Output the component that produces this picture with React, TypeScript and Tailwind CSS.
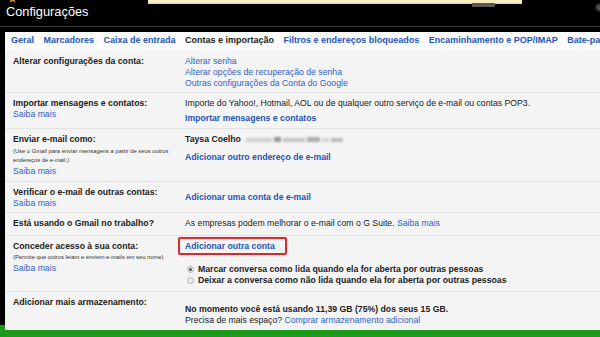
import React from "react";

const link = "text-[#2f63c8]";
const linkB = "text-[#2455b8] font-bold";

function Row({
  h,
  left,
  right,
  rightPt = "pt-[5px]",
  last = false,
}: {
  h: string;
  left: React.ReactNode;
  right: React.ReactNode;
  rightPt?: string;
  last?: boolean;
}) {
  return (
    <div className={`${h} flex shrink-0 ${last ? "" : "border-b border-[#e2e2e2]"}`}>
      <div className="w-[180px] shrink-0 pl-[8px] pt-[5px]">{left}</div>
      <div className={`flex-1 ${rightPt} whitespace-nowrap`}>{right}</div>
    </div>
  );
}

function Label({ children }: { children: React.ReactNode }) {
  return <div className="font-bold text-[#222] leading-[11px]">{children}</div>;
}

function Small({ children }: { children: React.ReactNode }) {
  return <div className="text-[5.8px] text-[#333] leading-[9.5px] whitespace-nowrap">{children}</div>;
}

function Radio({ checked, children }: { checked?: boolean; children: React.ReactNode }) {
  return (
    <div className="flex items-center gap-[4px] pl-[2px] leading-[11px] font-bold text-[#222]">
      <span className="w-[7px] h-[7px] rounded-full border border-[#b5b5b5] bg-[#e9e9e9] flex items-center justify-center">
        {checked && <span className="w-[3px] h-[3px] rounded-full bg-[#555]" />}
      </span>
      <span>{children}</span>
    </div>
  );
}

export default function App() {
  return (
    <div className="w-[600px] h-[337px] bg-black overflow-hidden flex flex-col font-['Liberation_Sans',Arial,sans-serif] text-[8.7px]">
      {/* header */}
      <div className="h-[32px] shrink-0 flex flex-col relative">
        <div className="h-[27px] border-b border-[#3c3c3c] pl-[6px] pt-[3px] text-white text-[12.8px] leading-[17px]">
          Configurações
        </div>
        <svg className="absolute left-[8px] top-[-6px] z-10" width="9" height="9" viewBox="0 0 10 10">
          <polygon points="5,0 6.2,3.6 10,3.7 7,6 8.1,9.6 5,7.5 1.9,9.6 3,6 0,3.7 3.8,3.6" fill="#f0a020" />
        </svg>
        <div className="absolute left-[148px] top-0 w-[374px] h-[4px] bg-[#fbefc2] border-b border-[#e6d59a]" />
        <div className="absolute left-[472px] top-[3px] w-[23px] h-[4px] bg-[#5a5a5a] rounded-b-[1px]" />
        <div className="absolute left-[596px] top-[4px] w-[7px] h-[7px] rounded-full bg-[#555] blur-[1px]" />
      </div>

      {/* main */}
      <div className="flex flex-1 min-h-0">
        <div className="w-[5px] shrink-0 flex flex-col">
          <div className="flex-1 bg-black" />
          <div className="h-[5px] bg-[#1c9a1c]" />
        </div>
        <div className="flex-1 flex flex-col bg-[#f4f4f4]">
          {/* tabs */}
          <div className="h-[18px] shrink-0 bg-[#fbfbfb] flex items-center gap-[9.5px] pl-[6px] whitespace-nowrap overflow-hidden font-bold text-[9px]">
            <span className="text-[#2455b8]">Geral</span>
            <span className="text-[#2455b8]">Marcadores</span>
            <span className="text-[#2455b8]">Caixa de entrada</span>
            <span className="text-[#222]">Contas e importação</span>
            <span className="text-[#2455b8]">Filtros e endereços bloqueados</span>
            <span className="text-[#2455b8]">Encaminhamento e POP/IMAP</span>
            <span className="text-[#2455b8]">Bate-papo</span>
          </div>

          <Row
            h="h-[43px]"
            rightPt="pt-[6px]"
            left={<div className="pt-[1px]"><Label>Alterar configurações da conta:</Label></div>}
            right={
              <div className="leading-[11px]">
                <div className={link}>Alterar senha</div>
                <div className={link}>Alterar opções de recuperação de senha</div>
                <div className={link}>Outras configurações da Conta do Google</div>
              </div>
            }
          />

          <Row
            h="h-[36px]"
            left={
              <>
                <Label>Importar mensagens e contatos:</Label>
                <div className={`${link} leading-[11px]`}>Saiba mais</div>
              </>
            }
            right={
              <div className="leading-[11px]">
                <div className="text-[#222]">
                  Importe do Yahoo!, Hotmail, AOL ou de qualquer outro serviço de e-mail ou contas POP3.
                </div>
                <div className={`${linkB} mt-[3.5px]`}>Importar mensagens e contatos</div>
              </div>
            }
          />

          <Row
            h="h-[53px]"
            left={
              <>
                <Label>Enviar e-mail como:</Label>
                <div className="mt-[1.5px]">
                  <Small>(Use o Gmail para enviar mensagens a partir de seus outros</Small>
                  <Small>endereços de e-mail.)</Small>
                </div>
                <div className={`${link} leading-[11px]`}>Saiba mais</div>
              </>
            }
            right={
              <div className="leading-[11px]">
                <div className="flex items-center">
                  <span className="font-bold text-[#222]">Taysa Coelho</span>
                  <span className="ml-[5px] flex items-center gap-[2px] blur-[0.8px]">
                    <span className="w-[26px] h-[4px] bg-[#cfcfcf]" />
                    <span className="w-[7px] h-[5px] bg-[#9a9a9a]" />
                    <span className="w-[22px] h-[4px] bg-[#c4c4c4]" />
                    <span className="w-[13px] h-[5px] bg-[#b0b0b0]" />
                    <span className="w-[7px] h-[4px] bg-[#d0d0d0]" />
                    <span className="w-[12px] h-[4px] bg-[#bdbdbd]" />
                  </span>
                </div>
                <div className={`${linkB} mt-[6.5px]`}>Adicionar outro endereço de e-mail</div>
              </div>
            }
          />

          <Row
            h="h-[31px]"
            rightPt="pt-[9.5px]"
            left={
              <>
                <Label>Verificar o e-mail de outras contas:</Label>
                <div className={`${link} leading-[11px]`}>Saiba mais</div>
              </>
            }
            right={<div className={`${linkB} leading-[11px]`}>Adicionar uma conta de e-mail</div>}
          />

          <Row
            h="h-[23px]"
            left={<Label>Está usando o Gmail no trabalho?</Label>}
            right={
              <div className="leading-[11px] text-[#222]">
                As empresas podem melhorar o e-mail com o G Suite. <span className={link}>Saiba mais</span>
              </div>
            }
          />

          <Row
            h="h-[56px]"
            rightPt="pt-[1px]"
            left={
              <>
                <Label>Conceder acesso à sua conta:</Label>
                <div className="mt-[1px]">
                  <Small>(Permite que outros leiam e enviem e-mails em seu nome)</Small>
                </div>
                <div className={`${link} leading-[11px]`}>Saiba mais</div>
              </>
            }
            right={
              <div>
                <div className="ml-[-7px] w-[109px] h-[18px] border-2 border-[#e5252a] rounded-[2px] pl-[5px] flex items-center">
                  <span className={`${linkB} leading-[11px]`}>Adicionar outra conta</span>
                </div>
                <div className="mt-[8.5px]">
                  <Radio checked>Marcar conversa como lida quando ela for aberta por outras pessoas</Radio>
                  <Radio>Deixar a conversa como não lida quando ela for aberta por outras pessoas</Radio>
                </div>
              </div>
            }
          />

          <Row
            h="h-[38px]"
            last
            rightPt="pt-[12px]"
            left={<Label>Adicionar mais armazenamento:</Label>}
            right={
              <div className="leading-[10.5px]">
                <div className="font-bold text-[#222]">
                  No momento você está usando 11,39 GB (75%) dos seus 15 GB.
                </div>
                <div className="text-[#222]">
                  Precisa de mais espaço? <span className={link}>Comprar armazenamento adicional</span>
                </div>
              </div>
            }
          />
        </div>
      </div>

      <div className="h-[7px] shrink-0 bg-[#1c9a1c]" />
    </div>
  );
}
